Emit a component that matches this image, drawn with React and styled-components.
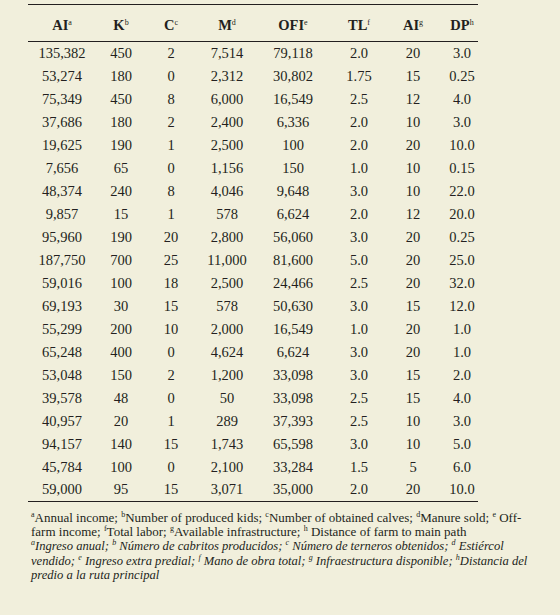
import React from "react"
import styled, { createGlobalStyle } from "styled-components"

const serif = `"Liberation Serif", "Times New Roman", Times, serif`

const GlobalStyle = createGlobalStyle`
    html, body {
        margin: 0;
        padding: 0;
        background: #f1efdc;
    }
    body {
        font-family: ${serif};
        color: #231f20;
    }
`

const Page = styled.div`
    width: 560px;
    height: 615px;
    padding: 4px 0 0 28px;
    box-sizing: border-box;
    display: flex;
    flex-direction: column;
    gap: 9px;
    font-family: ${serif};
`

const Table = styled.table`
    width: 450px;
    table-layout: fixed;
    border-collapse: collapse;
    border-top: 1.5px solid #231f20;
    border-bottom: 1.5px solid #231f20;
    font-family: ${serif};
    font-size: 14.5px;
    color: #231f20;
`

const HeadRow = styled.tr`
    height: 37px;
    border-bottom: 1.5px solid #231f20;
`

const HeadCell = styled.th`
    font-weight: 700;
    text-align: center;
    width: ${p => p.$w}px;
    padding: 4px 0 0 ${p => p.$pad || 0}px;
    vertical-align: middle;
`

const Sup = styled.sup`
    font-size: 8px;
    font-weight: 400;
    vertical-align: 5px;
    line-height: 0;
`

const Row = styled.tr`
    height: 23px;
`

const Cell = styled.td`
    text-align: center;
    padding: 0 0 0 ${p => p.$pad || 0}px;
`

const Notes = styled.div`
    padding-left: 3px;
    font-family: ${serif};
    font-size: 13px;
    line-height: 14.2px;
    white-space: nowrap;
`

const NoteLine = styled.div`
    font-style: ${p => (p.$italic ? "italic" : "normal")};
    font-size: ${p => (p.$italic ? "12.6px" : "13px")};
`

const cols = [
    { label: "AI", sup: "a", w: 68 },
    { label: "K", sup: "b", w: 50 },
    { label: "C", sup: "c", w: 50 },
    { label: "M", sup: "d", w: 62 },
    { label: "OFI", sup: "e", w: 70 },
    { label: "TL", sup: "f", w: 62 },
    { label: "AI", sup: "g", w: 46 },
    { label: "DP", sup: "h", w: 32, pad: 10 },
]

const rows = [
    ["135,382", "450", "2", "7,514", "79,118", "2.0", "20", "3.0"],
    ["53,274", "180", "0", "2,312", "30,802", "1.75", "15", "0.25"],
    ["75,349", "450", "8", "6,000", "16,549", "2.5", "12", "4.0"],
    ["37,686", "180", "2", "2,400", "6,336", "2.0", "10", "3.0"],
    ["19,625", "190", "1", "2,500", "100", "2.0", "20", "10.0"],
    ["7,656", "65", "0", "1,156", "150", "1.0", "10", "0.15"],
    ["48,374", "240", "8", "4,046", "9,648", "3.0", "10", "22.0"],
    ["9,857", "15", "1", "578", "6,624", "2.0", "12", "20.0"],
    ["95,960", "190", "20", "2,800", "56,060", "3.0", "20", "0.25"],
    ["187,750", "700", "25", "11,000", "81,600", "5.0", "20", "25.0"],
    ["59,016", "100", "18", "2,500", "24,466", "2.5", "20", "32.0"],
    ["69,193", "30", "15", "578", "50,630", "3.0", "15", "12.0"],
    ["55,299", "200", "10", "2,000", "16,549", "1.0", "20", "1.0"],
    ["65,248", "400", "0", "4,624", "6,624", "3.0", "20", "1.0"],
    ["53,048", "150", "2", "1,200", "33,098", "3.0", "15", "2.0"],
    ["39,578", "48", "0", "50", "33,098", "2.5", "15", "4.0"],
    ["40,957", "20", "1", "289", "37,393", "2.5", "10", "3.0"],
    ["94,157", "140", "15", "1,743", "65,598", "3.0", "10", "5.0"],
    ["45,784", "100", "0", "2,100", "33,284", "1.5", "5", "6.0"],
    ["59,000", "95", "15", "3,071", "35,000", "2.0", "20", "10.0"],
]

const App = () => {
    return (
        <>
            <GlobalStyle />
            <Page>
                <Table>
                    <thead>
                        <HeadRow>
                            {cols.map((c, i) => (
                                <HeadCell key={i} $w={c.w} $pad={c.pad}>
                                    {c.label}
                                    <Sup>{c.sup}</Sup>
                                </HeadCell>
                            ))}
                        </HeadRow>
                    </thead>
                    <tbody>
                        {rows.map((r, i) => (
                            <Row key={i}>
                                {r.map((v, j) => (
                                    <Cell key={j} $pad={cols[j].pad}>{v}</Cell>
                                ))}
                            </Row>
                        ))}
                    </tbody>
                </Table>
                <Notes>
                    <NoteLine>
                        <Sup>a</Sup>Annual income; <Sup>b</Sup>Number of produced kids; <Sup>c</Sup>Number of obtained calves; <Sup>d</Sup>Manure sold; <Sup>e</Sup> Off-
                    </NoteLine>
                    <NoteLine>
                        farm income; <Sup>f</Sup>Total labor; <Sup>g</Sup>Available infrastructure; <Sup>h</Sup> Distance of farm to main path
                    </NoteLine>
                    <NoteLine $italic>
                        <Sup>a</Sup>Ingreso anual; <Sup>b</Sup> Número de cabritos producidos; <Sup>c</Sup> Número de terneros obtenidos; <Sup>d</Sup> Estiércol
                    </NoteLine>
                    <NoteLine $italic>
                        vendido; <Sup>e</Sup> Ingreso extra predial; <Sup>f</Sup> Mano de obra total; <Sup>g</Sup> Infraestructura disponible; <Sup>h</Sup>Distancia del
                    </NoteLine>
                    <NoteLine $italic>
                        predio a la ruta principal
                    </NoteLine>
                </Notes>
            </Page>
        </>
    )
}

export default App
